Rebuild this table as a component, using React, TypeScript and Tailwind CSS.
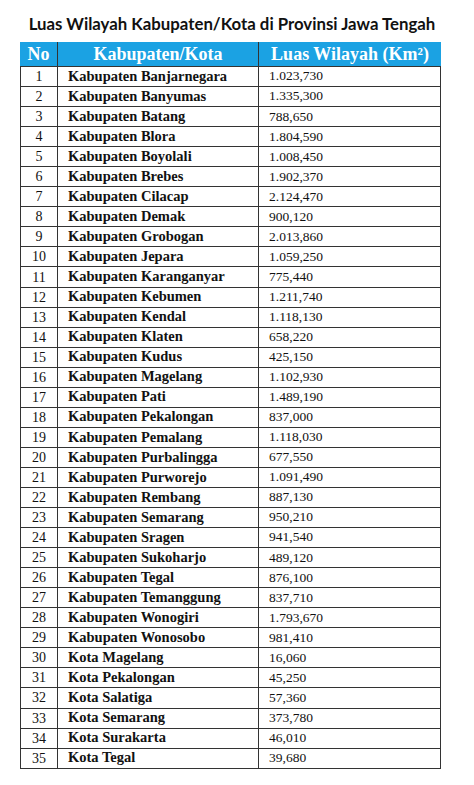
const rows: [string, string][] = [
  ["Kabupaten Banjarnegara", "1.023,730"],
  ["Kabupaten Banyumas", "1.335,300"],
  ["Kabupaten Batang", "788,650"],
  ["Kabupaten Blora", "1.804,590"],
  ["Kabupaten Boyolali", "1.008,450"],
  ["Kabupaten Brebes", "1.902,370"],
  ["Kabupaten Cilacap", "2.124,470"],
  ["Kabupaten Demak", "900,120"],
  ["Kabupaten Grobogan", "2.013,860"],
  ["Kabupaten Jepara", "1.059,250"],
  ["Kabupaten Karanganyar", "775,440"],
  ["Kabupaten Kebumen", "1.211,740"],
  ["Kabupaten Kendal", "1.118,130"],
  ["Kabupaten Klaten", "658,220"],
  ["Kabupaten Kudus", "425,150"],
  ["Kabupaten Magelang", "1.102,930"],
  ["Kabupaten Pati", "1.489,190"],
  ["Kabupaten Pekalongan", "837,000"],
  ["Kabupaten Pemalang", "1.118,030"],
  ["Kabupaten Purbalingga", "677,550"],
  ["Kabupaten Purworejo", "1.091,490"],
  ["Kabupaten Rembang", "887,130"],
  ["Kabupaten Semarang", "950,210"],
  ["Kabupaten Sragen", "941,540"],
  ["Kabupaten Sukoharjo", "489,120"],
  ["Kabupaten Tegal", "876,100"],
  ["Kabupaten Temanggung", "837,710"],
  ["Kabupaten Wonogiri", "1.793,670"],
  ["Kabupaten Wonosobo", "981,410"],
  ["Kota Magelang", "16,060"],
  ["Kota Pekalongan", "45,250"],
  ["Kota Salatiga", "57,360"],
  ["Kota Semarang", "373,780"],
  ["Kota Surakarta", "46,010"],
  ["Kota Tegal", "39,680"],
];

export default function App() {
  return (
    <div className="min-h-[785px] w-[474px] bg-white">
      <div className="ml-[20px] w-[421px] pt-[12px]">
        <h1 className="h-[30px] pl-[3px] text-center font-['Lato',sans-serif] text-[16.8px] font-bold leading-[24px] text-[#111]">
          Luas Wilayah Kabupaten/Kota di Provinsi Jawa Tengah
        </h1>

        <div className="font-['Liberation_Serif',serif]">
          <div className="flex h-[24px] items-center bg-[#1ba2e3] text-[18px] font-bold leading-none text-white">
            <div className="flex h-full w-[38px] items-center justify-center border-r border-[#333]">No</div>
            <div className="flex h-full w-[201px] items-center justify-center border-r border-[#333]">
              Kabupaten/Kota
            </div>
            <div className="flex h-full flex-1 items-center justify-center">Luas Wilayah (Km²)</div>
          </div>

          <div className="border-x border-t border-[#333]">
            {rows.map(([name, area], index) => (
              <div key={name} className="flex h-[20.05px] border-b border-[#333] text-[#111]">
                <div className="flex w-[37px] items-center justify-center border-r border-[#333] text-[14px]">
                  {index + 1}
                </div>
                <div className="flex w-[201px] items-center border-r border-[#333] pl-[10px] text-[14.5px] font-bold">
                  {name}
                </div>
                <div className="flex flex-1 items-center pl-[10px] text-[13.5px]">{area}</div>
              </div>
            ))}
          </div>
        </div>
      </div>
    </div>
  );
}
